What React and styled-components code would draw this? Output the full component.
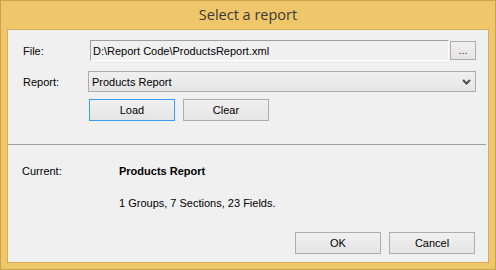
import React from "react";
import styled, { createGlobalStyle } from "styled-components";

const Global = createGlobalStyle`
  html, body { margin: 0; padding: 0; background: #efc76a; }
  * { box-sizing: border-box; }
`;

const Window = styled.div`
  width: 496px;
  height: 270px;
  border: 1px solid #c9a24c;
  background: #efc76a;
  display: flex;
  flex-direction: column;
  padding: 0 6px 6px 6px;
`;

const TitleBar = styled.div`
  height: 28px;
  display: flex;
  align-items: center;
  justify-content: center;
  font-family: "Open Sans", "Noto Sans", sans-serif;
  font-size: 14.5px;
  color: #3a3a3a;
  padding-bottom: 1px;
`;

const Panel = styled.div`
  flex: 1;
  border: 1px solid #d6ae57;
  background: #f0f0f0;
  display: flex;
  flex-direction: column;
  font-family: "Liberation Sans", Arial, sans-serif;
  font-size: 11px;
  color: #000;
`;

const Row = styled.div`
  display: flex;
  align-items: center;
  height: ${(p) => p.$h}px;
  margin-top: ${(p) => p.$mt}px;
  padding-left: ${(p) => p.$pl ?? 15}px;
`;

const Label = styled.div`
  width: ${(p) => p.$w}px;
  flex: none;
`;

const TextBox = styled.div`
  width: 359px;
  height: 21px;
  border-top: 1px solid #a0a0a0;
  border-left: 1px solid #a0a0a0;
  border-bottom: 1px solid #ffffff;
  border-right: 1px solid #ffffff;
  background: #f0f0f0;
  display: flex;
  align-items: center;
  padding-left: 2px;
  padding-top: 1px;
  color: #000;
  white-space: nowrap;
`;

const Button = styled.button`
  width: ${(p) => p.$w ?? 86}px;
  height: ${(p) => p.$h ?? 22}px;
  margin: 0;
  padding: 0;
  border: 1px solid ${(p) => (p.$focused ? "#3c9cf0" : "#adadad")};
  background: linear-gradient(#f0f0f0, #e5e5e5);
  font-family: "Liberation Sans", Arial, sans-serif;
  font-size: 11px;
  color: #000;
  flex: none;
  display: flex;
  align-items: center;
  justify-content: center;
`;

const BrowseButton = styled(Button)`
  margin-left: 1px;
  align-items: flex-end;
  padding-bottom: 3px;
  letter-spacing: 0px;
  color: #4a1a6a;
`;

const Combo = styled.div`
  width: 388px;
  height: 21px;
  border: 1px solid #acacac;
  background: linear-gradient(#f0f0f0, #e5e5e5);
  display: flex;
  align-items: center;
  justify-content: space-between;
  padding: 0 4px 0 3px;
`;

const Buttons = styled.div`
  display: flex;
  gap: ${(p) => p.$gap}px;
  margin-left: ${(p) => p.$ml ?? 0}px;
`;

const Separator = styled.div`
  height: 1px;
  width: 478px;
  background: #a0a0a0;
  margin-top: 23px;
`;

const Value = styled.div`
  font-weight: ${(p) => (p.$bold ? 700 : 400)};
`;

const Footer = styled.div`
  margin-top: auto;
  margin-bottom: 8px;
  display: flex;
  justify-content: flex-end;
  padding-right: 13px;
  gap: 8px;
`;

const Chevron = () => (
  <svg width="9" height="6" viewBox="0 0 9 6">
    <polyline points="1,1 4.5,4.5 8,1" fill="none" stroke="#4d4d4d" strokeWidth="2" />
  </svg>
);

export default function App() {
  return (
    <>
      <Global />
      <Window>
        <TitleBar>Select a report</TitleBar>
        <Panel>
          <Row $h={21} $mt={10}>
            <Label $w={67}>File:</Label>
            <TextBox>D:\Report Code\ProductsReport.xml</TextBox>
            <BrowseButton $w={26} $h={19}>...</BrowseButton>
          </Row>
          <Row $h={21} $mt={10}>
            <Label $w={65}>Report:</Label>
            <Combo>
              <span>Products Report</span>
              <Chevron />
            </Combo>
          </Row>
          <Row $h={22} $mt={7}>
            <Buttons $gap={8} $ml={66}>
              <Button $focused>Load</Button>
              <Button>Clear</Button>
            </Buttons>
          </Row>
          <Separator />
          <Row $h={13} $mt={19} $pl={14}>
            <Label $w={97}>Current:</Label>
            <Value $bold>Products Report</Value>
          </Row>
          <Row $h={13} $mt={19} $pl={111}>
            <Value>1 Groups, 7 Sections, 23 Fields.</Value>
          </Row>
          <Footer>
            <Button>OK</Button>
            <Button>Cancel</Button>
          </Footer>
        </Panel>
      </Window>
    </>
  );
}
